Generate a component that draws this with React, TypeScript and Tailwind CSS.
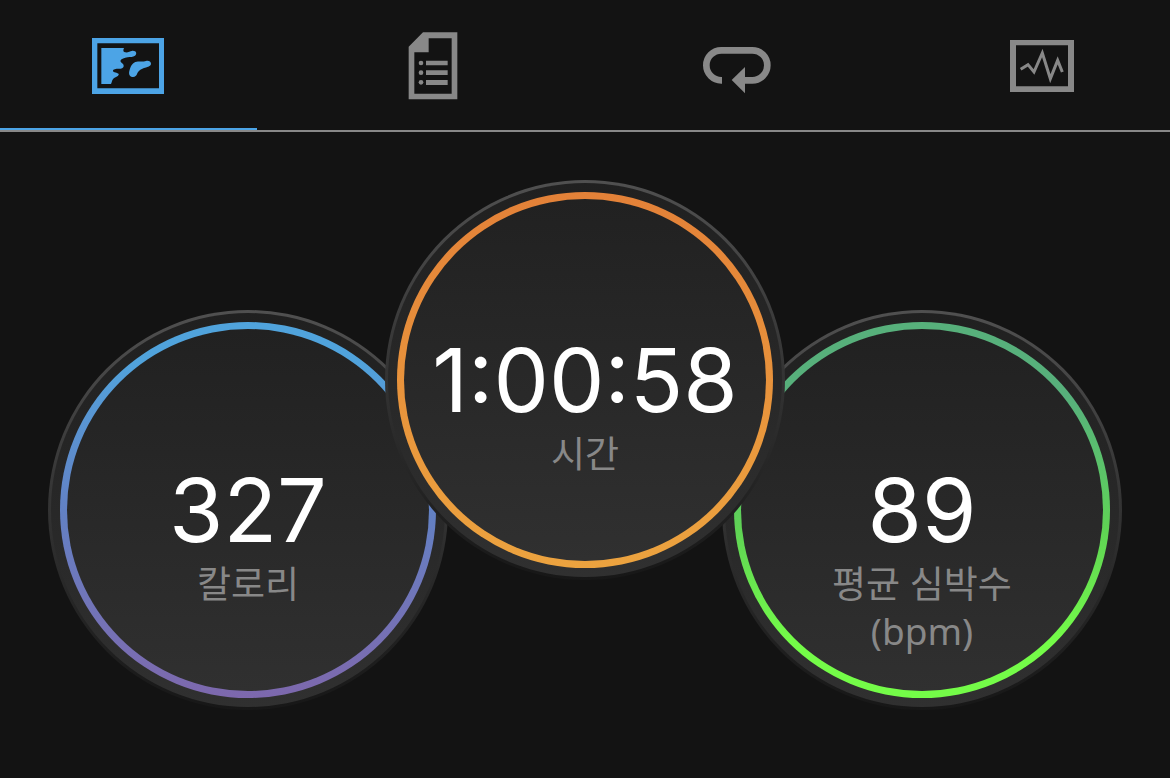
import { useState } from "react";
import type { ReactNode } from "react";

type Tab = { label: string; icon: ReactNode };

const tabs: Tab[] = [
  {
    label: "지도",
    icon: (
      <>
        <path fillRule="evenodd" d="M36 39H252V207H36ZM52 55V190H237V55Z" />
        <path d="M64 69H132C129 76 129 81 135 82C144 84 149 78 157 77C169 76 172 86 165 92C159 97 151 95 143 97C133 99 124 101 122 106C119 113 131 115 131 122C131 130 124 131 116 131C108 131 99 132 99 137C99 143 114 142 116 147C118 153 106 156 100 161C95 166 96 172 93 177H64Z" />
        <path d="M198 108C206 106 213 110 213 116C213 123 204 125 195 128C181 133 175 137 172 145C169 154 164 157 157 156C148 154 145 146 149 134C153 121 158 112 170 110C181 109 189 111 198 108Z" />
      </>
    ),
  },
  {
    label: "통계",
    icon: (
      <>
        <path fillRule="evenodd" d="M114 22H217V223H71V65ZM131 40V82H88V206H200V40Z" />
        <circle cx="108" cy="114" r="7" />
        <circle cx="108" cy="143" r="7" />
        <circle cx="108" cy="172" r="7" />
        <path d="M123 107H188V121H123ZM123 136H188V150H123ZM123 165H188V180H123Z" />
      </>
    ),
  },
  {
    label: "랩",
    icon: (
      <>
        <path
          d="M99 166H97A45 45 0 0 1 97 76H190A45 45 0 0 1 190 166H160"
          fill="none"
          stroke="currentColor"
          strokeWidth="20"
        />
        <path d="M128 165L168 126V205Z" />
      </>
    ),
  },
  {
    label: "그래프",
    icon: (
      <>
        <path fillRule="evenodd" d="M48 45H240V201H48ZM66 61V184H222V61Z" />
        <path
          d="M80 133L102 119L120 141L145 84L169 161L191 106L205 141"
          fill="none"
          stroke="currentColor"
          strokeWidth="9"
        />
      </>
    ),
  },
];

function Gauge({ value, label, ring, className }: { value: string; label: string; ring: string; className: string }) {
  return (
    <div className={`size-[400px] shrink-0 rounded-full bg-linear-to-b from-[#505050] via-[#303030] via-55% to-[#171717] p-[3px] ${className}`}>
      <div className="size-full rounded-full bg-linear-to-b from-[#202020] to-[#303030] p-[9px]">
        <div className={`size-full rounded-full bg-linear-to-b p-[7px] ${ring}`}>
          <div className="flex size-full flex-col items-center rounded-full bg-linear-to-b from-[#212121] to-[#303030] pt-[131px] text-center">
            <p className="text-[88px] leading-[100px] text-white">{value}</p>
            <p className="w-[200px] font-['Noto_Sans','Noto_Sans_CJK_KR',sans-serif] text-[37px] leading-[47px] break-keep text-[#888]">
              {label}
            </p>
          </div>
        </div>
      </div>
    </div>
  );
}

export default function App() {
  const [active, setActive] = useState(0);
  return (
    <div className="min-h-screen bg-[#131313] font-['Inter','Noto_Sans_CJK_KR',sans-serif]">
      <nav className="grid grid-cols-4 gap-x-12 border-b-2 border-[#888]">
        {tabs.map((tab, i) => (
          <button
            key={tab.label}
            type="button"
            aria-label={tab.label}
            aria-pressed={i === active}
            onClick={() => setActive(i)}
            className={`flex justify-center border-b-2 pt-[25px] pb-[23px] ${
              i === active ? "border-[#4ca4e6] text-[#4ca4e6]" : "border-transparent text-[#888]"
            }`}
          >
            <svg viewBox="0 0 288 240" className="h-20 w-24" fill="currentColor" aria-hidden="true">
              {tab.icon}
            </svg>
          </button>
        ))}
      </nav>
      <main className="flex items-start justify-center pt-12 pb-[68px]">
        <Gauge value="327" label="칼로리" className="mt-[130px]" ring="from-[#50a3dc] from-10% via-[#6281c4] via-50% to-[#7d68ad]" />
        <Gauge value="1:00:58" label="시간" className="z-10 -mx-[63px]" ring="from-[#e38138] to-[#eca33f]" />
        <Gauge value="89" label="평균 심박수 (bpm)" className="mt-[130px]" ring="from-[#57b07b] from-20% via-[#5fd354] via-55% to-[#74fc48] to-85%" />
      </main>
    </div>
  );
}
